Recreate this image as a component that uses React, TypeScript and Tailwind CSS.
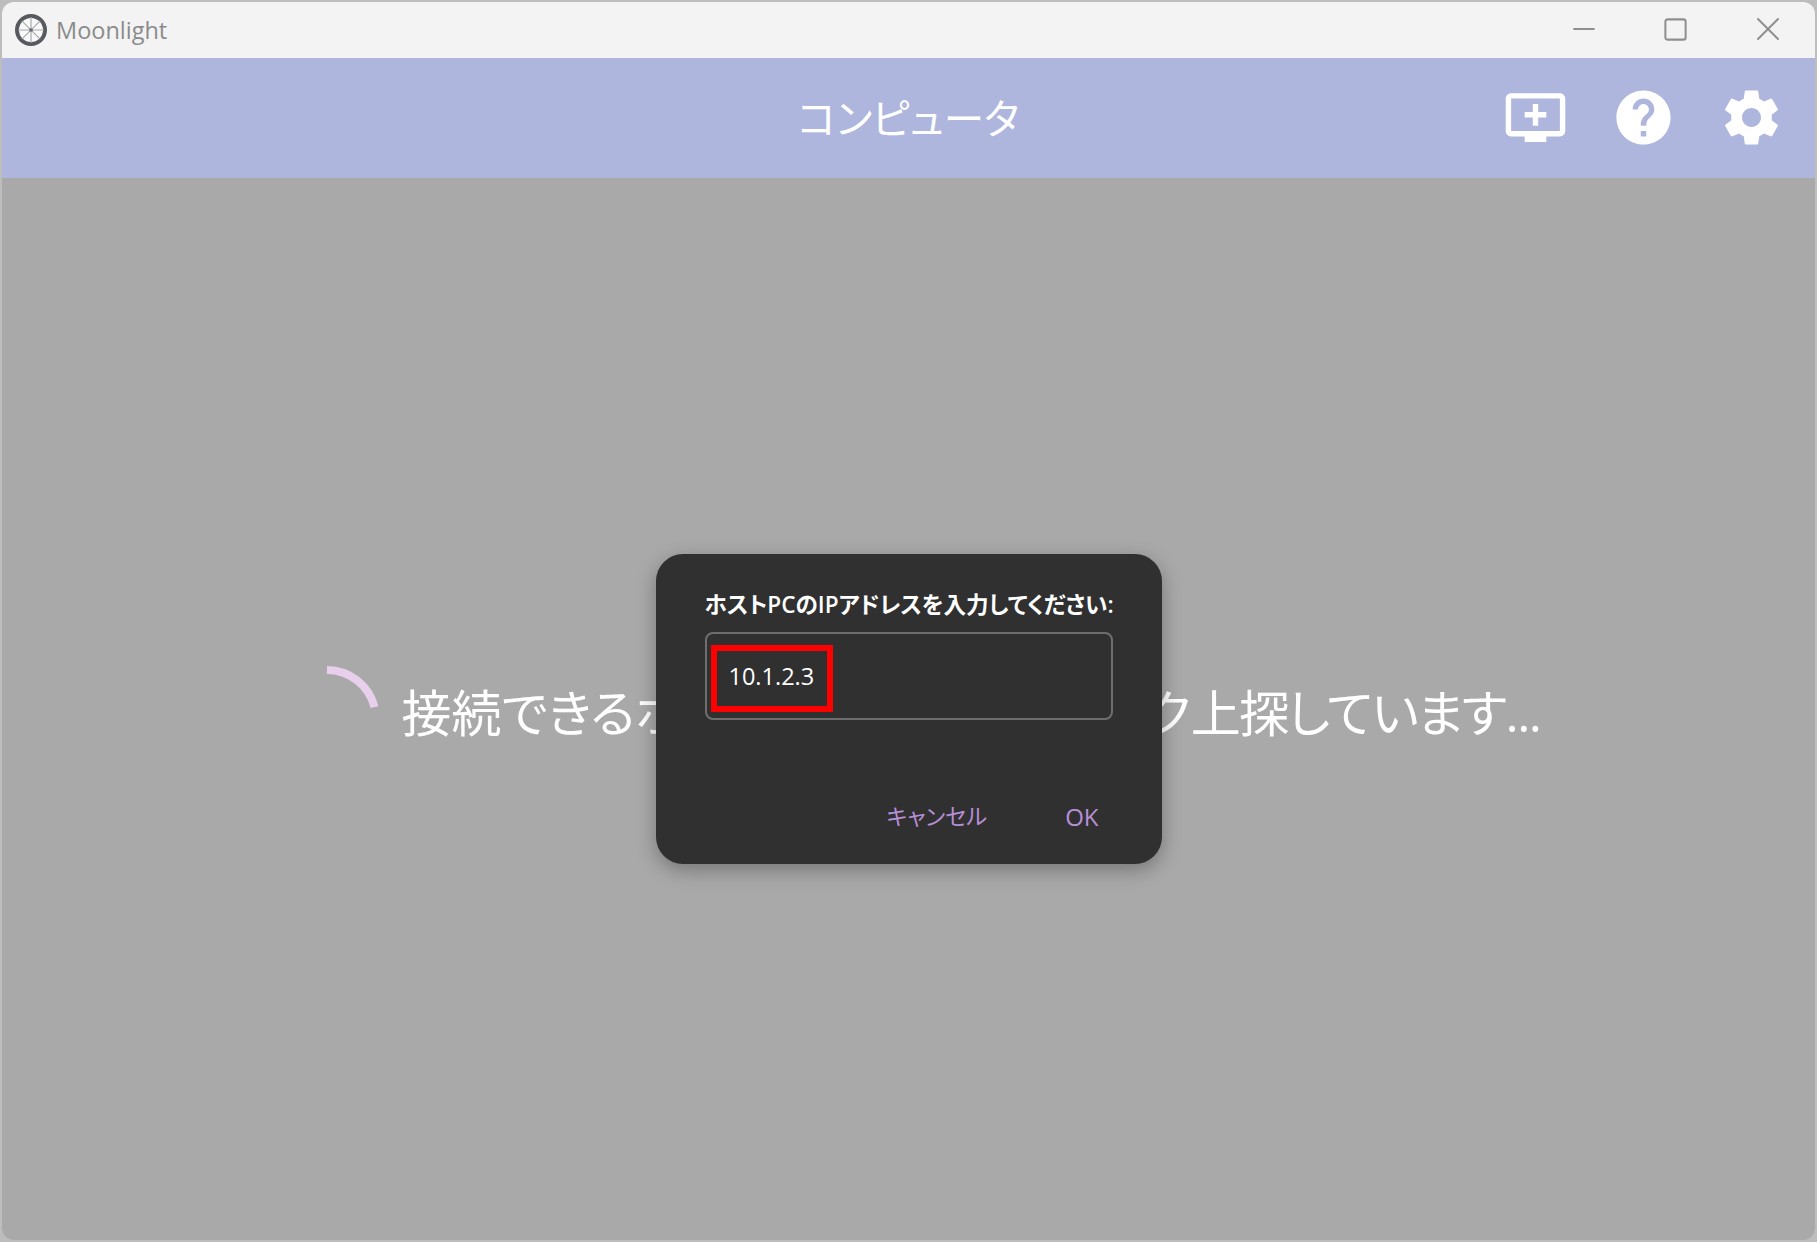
import { Minus, Square, X } from "lucide-react"

const addPath =
  "M21 3H3c-1.11 0-2 .89-2 2v12c0 1.1.89 2 2 2h5v2h8v-2h5c1.1 0 1.99-.9 1.99-2L23 5c0-1.11-.9-2-2-2zm0 14H3V5h18v12zm-5-7v2h-3v3h-2v-3H8v-2h3V7h2v3h3z"
const helpPath =
  "M12 2C6.48 2 2 6.48 2 12s4.48 10 10 10 10-4.48 10-10S17.52 2 12 2zm1 17h-2v-2h2v2zm2.07-7.75l-.9.92C13.45 12.9 13 13.5 13 15h-2v-.5c0-1.1.45-2.1 1.17-2.83l1.24-1.26c.37-.36.59-.86.59-1.41 0-1.1-.9-2-2-2s-2 .9-2 2H8c0-2.21 1.79-4 4-4s4 1.79 4 4c0 .88-.36 1.68-.93 2.25z"
const gearPath =
  "M19.43 12.98c.04-.32.07-.64.07-.98s-.03-.66-.07-.98l2.11-1.65c.19-.15.24-.42.12-.64l-2-3.46c-.12-.22-.39-.3-.61-.22l-2.49 1c-.52-.4-1.08-.73-1.69-.98l-.38-2.65C14.46 2.18 14.25 2 14 2h-4c-.25 0-.46.18-.49.42l-.38 2.65c-.61.25-1.17.59-1.69.98l-2.49-1c-.23-.09-.49 0-.61.22l-2 3.46c-.13.22-.07.49.12.64l2.11 1.65c-.04.32-.07.65-.07.98s.03.66.07.98l-2.11 1.65c-.19.15-.24.42-.12.64l2 3.46c.12.22.39.3.61.22l2.49-1c.52.4 1.08.73 1.69.98l.38 2.65c.03.24.24.42.49.42h4c.25 0 .46-.18.49-.42l.38-2.65c.61-.25 1.17-.59 1.69-.98l2.49 1c.23.09.49 0 .61-.22l2-3.46c.12-.22.07-.49-.12-.64l-2.11-1.65zM12 15.5c-1.93 0-3.5-1.57-3.5-3.5s1.57-3.5 3.5-3.5 3.5 1.57 3.5 3.5-1.57 3.5-3.5 3.5z"

function HeaderIcon({ d }: { d: string }) {
  return (
    <svg viewBox="0 0 24 24" className="h-[65px] w-[65px] fill-white">
      <path d={d} />
    </svg>
  )
}

function WheelLogo() {
  return (
    <svg viewBox="0 0 32 32" className="h-8 w-8">
      <circle cx="16" cy="16" r="14" fill="#f8f8f8" stroke="#565a60" strokeWidth="4" />
      <path d="M16 3v26M3 16h26M6.8 6.8l18.4 18.4M25.2 6.8L6.8 25.2" stroke="#a7aaad" strokeWidth="1.2" />
      <circle cx="16" cy="16" r="1.8" fill="#6a6e74" />
    </svg>
  )
}

export default function App() {
  return (
    <div className="h-[1242px] w-[1817px] overflow-hidden bg-[#bdbdbd] p-[2px] font-['Open_Sans','Noto_Sans_CJK_JP',sans-serif] [font-feature-settings:'palt']">
      <div className="flex h-full flex-col overflow-hidden rounded-[12px]">
        <div className="flex h-[56px] items-center bg-[#f3f3f3] pl-[13px] pr-[27px]">
          <WheelLogo />
          <span className="ml-[9px] pt-[1px] text-[23.5px] text-[#8b8b8b]">Moonlight</span>
          <div className="ml-auto flex items-center pb-[2px] text-[#8f8f8f]">
            <div className="flex w-[40px] justify-center">
              <Minus size={34} strokeWidth={1.4} />
            </div>
            <div className="ml-[51px] flex w-[40px] justify-center">
              <Square size={27} strokeWidth={1.8} />
            </div>
            <div className="ml-[53px] flex w-[40px] justify-center">
              <X size={40} strokeWidth={1.2} />
            </div>
          </div>
        </div>

        <div className="grid h-[120px] grid-cols-[1fr_auto_1fr] items-center bg-[#aeb6de]">
          <div />
          <h1 className="pt-[3px] text-[40.5px] text-white">コンピュータ</h1>
          <div className="flex items-center justify-end gap-[43px] pb-[2px] pr-[31px]">
            <HeaderIcon d={addPath} />
            <HeaderIcon d={helpPath} />
            <HeaderIcon d={gearPath} />
          </div>
        </div>

        <main className="relative flex flex-1 items-center justify-center bg-[#a9a9a9] pr-[6px] pt-[8px]">
          <div className="flex items-center gap-[25px]">
            <svg viewBox="0 0 106 106" className="h-[106px] w-[106px] translate-x-[3px] translate-y-[6px]">
              <path d="M53 4A49 49 0 0 1 100.5 41.1" fill="none" stroke="#e8cfec" strokeWidth="8" />
            </svg>
            <span className="whitespace-nowrap text-[50px] text-white">
              接続できるホ<span className="tracking-[-6.5px]">ストをローカルネットワー</span>ク<span className="tracking-[-1.5px]">上探しています...</span>
            </span>
          </div>

          <div className="absolute inset-0 flex items-center justify-center">
            <div className="flex h-[310px] w-[506px] flex-col rounded-[27px] bg-[#303030] px-[49px] pb-[31px] pt-[35px] shadow-[0_6px_20px_rgba(0,0,0,0.3)]">
              <label className="whitespace-nowrap text-[22.6px] font-semibold leading-[32px] text-white">
                ホストPCのIPアドレスを入力してください:
              </label>
              <div className="relative mt-[11px] flex h-[88px] items-center rounded-[8px] border-2 border-[#6e6e6e] pl-[22px] pt-[2px]">
                <span className="text-[23.5px] text-white">10.1.2.3</span>
                <div className="absolute left-[4px] top-[11px] h-[67px] w-[122px] border-[6px] border-[#ff0000]" />
              </div>
              <div className="mt-auto flex items-center justify-end gap-[78px] pr-[14px] leading-[32px] text-[#b78fd6]">
                <span className="text-[22.2px]">キャンセル</span>
                <span className="text-[24px]">OK</span>
              </div>
            </div>
          </div>
        </main>
      </div>
    </div>
  )
}
